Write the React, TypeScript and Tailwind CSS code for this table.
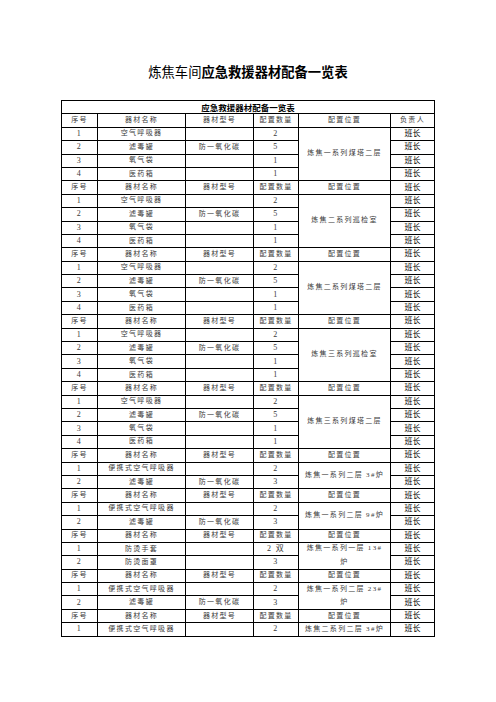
const std4 = [
  ["1", "空气呼吸器", "", "2"],
  ["2", "滤毒罐", "防一氧化碳", "5"],
  ["3", "氧气袋", "", "1"],
  ["4", "医药箱", "", "1"],
];

const portable = [
  ["1", "便携式空气呼吸器", "", "2"],
  ["2", "滤毒罐", "防一氧化碳", "3"],
];

type Block = { loc: string[]; items: string[][]; lead: string };

const blocks: Block[] = [
  { loc: ["炼焦一系列煤塔二层"], items: std4, lead: "负责人" },
  { loc: ["炼焦二系列巡检室"], items: std4, lead: "班长" },
  { loc: ["炼焦二系列煤塔二层"], items: std4, lead: "班长" },
  { loc: ["炼焦三系列巡检室"], items: std4, lead: "班长" },
  { loc: ["炼焦三系列煤塔二层"], items: std4, lead: "班长" },
  { loc: ["炼焦一系列二层 3#炉"], items: portable, lead: "班长" },
  { loc: ["炼焦一系列二层 9#炉"], items: portable, lead: "班长" },
  {
    loc: ["炼焦一系列一层 13#", "炉"],
    items: [
      ["1", "防烫手套", "", "2 双"],
      ["2", "防烫面罩", "", "3"],
    ],
    lead: "班长",
  },
  { loc: ["炼焦一系列二层 23#", "炉"], items: portable, lead: "班长" },
  { loc: ["炼焦二系列二层 3#炉"], items: [portable[0]], lead: "班长" },
];

const cell = "bg-white flex items-center justify-center whitespace-nowrap overflow-hidden";
const body = "text-[7px] tracking-[1.3px] text-[#3a3a3a] leading-none";
const lead = "text-[8px] text-black leading-none";

function HeadRow({ last }: { last: string }) {
  return (
    <>
      <div className={`${cell} ${body}`}>序号</div>
      <div className={`${cell} ${body}`}>器材名称</div>
      <div className={`${cell} ${body}`}>器材型号</div>
      <div className={`${cell} ${body}`}>配置数量</div>
      <div className={`${cell} ${body}`}>配置位置</div>
      <div className={`${cell} ${last === "班长" ? lead : body}`}>{last}</div>
    </>
  );
}

function BlockRows({ b }: { b: Block }) {
  const span = b.items.length === 4 ? "row-span-4" : b.items.length === 2 ? "row-span-2" : "";
  return (
    <>
      <HeadRow last={b.lead} />
      {b.items.map((it, i) => (
        <div key={i} className="contents">
          <div className={`${cell} ${body} text-[8px]`}>{it[0]}</div>
          <div className={`${cell} ${body}`}>{it[1]}</div>
          <div className={`${cell} ${body}`}>{it[2]}</div>
          <div className={`${cell} ${body} text-[8px]`}>{it[3]}</div>
          {i === 0 && (
            <div className={`${cell} ${body} ${span} flex-col`}>
              {b.loc.map((l) => (
                <span key={l} className="leading-[13.4px]">
                  {l}
                </span>
              ))}
            </div>
          )}
          <div className={`${cell} ${lead}`}>班长</div>
        </div>
      ))}
    </>
  );
}

export default function App() {
  return (
    <div
      className="w-[496px] h-[702px] bg-white"
      style={{ fontFamily: '"Liberation Serif", "Noto Sans CJK SC", serif' }}
    >
      <h1
        className="pt-[64px] text-center text-[13.3px] leading-[16px] text-black"
        style={{ fontFamily: '"Noto Sans CJK SC", sans-serif' }}
      >
        炼焦车间<span className="font-bold">应急救援器材配备一览表</span>
      </h1>
      <div className="mx-auto mt-[20px] grid w-[374px] grid-cols-[35px_87px_67px_44px_91px_43px] auto-rows-[12.4px] gap-px bg-black p-px">
        <div
          className={`${cell} col-span-6 text-[8.5px] font-bold text-black leading-none`}
          style={{ fontFamily: '"Noto Sans CJK SC", sans-serif' }}
        >
          应急救援器材配备一览表
        </div>
        {blocks.map((b, i) => (
          <BlockRows key={i} b={b} />
        ))}
      </div>
    </div>
  );
}
